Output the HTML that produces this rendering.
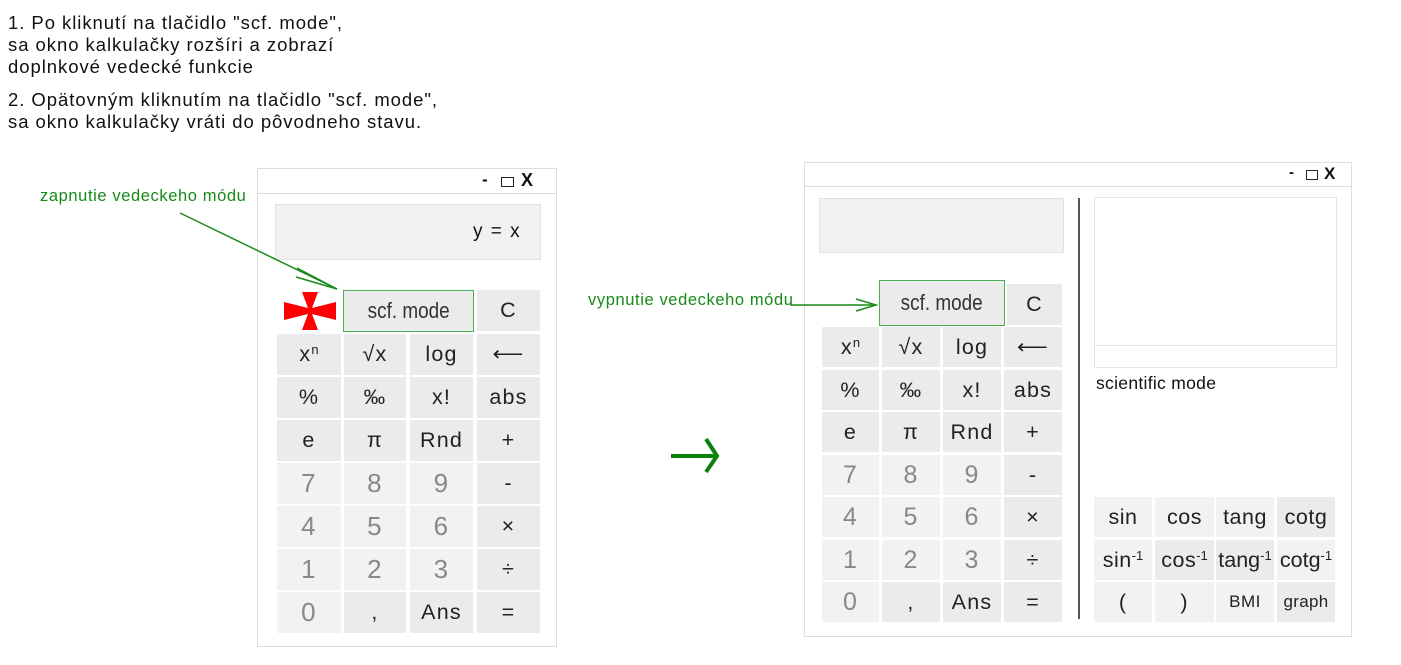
<!DOCTYPE html>
<html><head><meta charset="utf-8"><style>
*{margin:0;padding:0;box-sizing:border-box}
body{width:1401px;height:665px;background:#fff;position:relative;overflow:hidden;font-family:"Liberation Sans",Arial,sans-serif;color:#111}
.a{position:absolute}
.t{font-size:18.5px;line-height:22px;color:#111;white-space:nowrap;letter-spacing:0.95px}
.g{color:#178a17;font-size:16.5px;white-space:nowrap;letter-spacing:0.6px}
.win{position:absolute;border:1px solid #ddd;background:#fff}
.tb{position:absolute;left:0;right:0;top:0;border-bottom:1px solid #ddd}
.ctl{position:absolute;font-size:17px;font-weight:bold;color:#111}
.b{position:absolute;display:flex;align-items:center;justify-content:center;background:#ebebeb;color:#222;font-size:21.5px;letter-spacing:1.2px}
.d{background:#f2f2f2;color:#888}
.b sup{font-size:13px;position:relative;top:-5px;letter-spacing:0}
.disp{position:absolute;background:#f1f1f1;border:1px solid #e2e2e2}
.scf{position:absolute;display:flex;align-items:center;justify-content:center;background:#ebebeb;border:1px solid #4caf50;font-size:22px;color:#333}
.scf span{display:inline-block;transform:scaleX(0.86)}
</style></head><body>

<div class="a t" style="left:8px;top:12px">1. Po kliknutí na tlačidlo "scf. mode",<br>sa okno kalkulačky rozšíri a zobrazí<br>doplnkové vedecké funkcie</div>
<div class="a t" style="left:8px;top:89px">2. Opätovným kliknutím na tlačidlo "scf. mode",<br>sa okno kalkulačky vráti do pôvodneho stavu.</div>

<div class="a g" style="left:40px;top:187px">zapnutie vedeckeho módu</div>
<div class="a g" style="left:588px;top:291px">vypnutie vedeckeho módu</div>

<!-- LEFT WINDOW -->
<div class="win" style="left:257px;top:168px;width:300px;height:479px">
<div class="tb" style="height:25px"></div>
<div class="ctl" style="left:224px;top:1px">-</div>
<div class="a" style="left:243px;top:8px;width:13px;height:10px;border:1.5px solid #222"></div>
<div class="ctl" style="left:263px;top:1px;font-size:18px">X</div>
</div>
<div class="disp" style="left:275px;top:204px;width:266px;height:56px"></div>
<div class="a" style="left:473px;top:221px;font-size:19px;letter-spacing:1.5px">y = x</div>
<div class="scf" style="left:343px;top:290px;width:131px;height:42px"><span>scf. mode</span></div>
<div class="b" style="left:477px;top:290px;width:63px;height:41px">C</div>

<div class="b" style="left:277px;top:334px;width:64px;height:41px">x<sup>n</sup></div>
<div class="b" style="left:344px;top:334px;width:62px;height:41px">√x</div>
<div class="b" style="left:410px;top:334px;width:63px;height:41px">log</div>
<div class="b" style="left:477px;top:334px;width:63px;height:41px">⟵</div>
<div class="b" style="left:277px;top:377px;width:64px;height:41px">%</div>
<div class="b" style="left:344px;top:377px;width:62px;height:41px">‰</div>
<div class="b" style="left:410px;top:377px;width:63px;height:41px">x!</div>
<div class="b" style="left:477px;top:377px;width:63px;height:41px">abs</div>
<div class="b" style="left:277px;top:420px;width:64px;height:41px">e</div>
<div class="b" style="left:344px;top:420px;width:62px;height:41px">π</div>
<div class="b" style="left:410px;top:420px;width:63px;height:41px">Rnd</div>
<div class="b" style="left:477px;top:420px;width:63px;height:41px">+</div>
<div class="b d" style="left:277px;top:463px;width:64px;height:41px;font-size:26px">7</div>
<div class="b d" style="left:344px;top:463px;width:62px;height:41px;font-size:26px">8</div>
<div class="b d" style="left:410px;top:463px;width:63px;height:41px;font-size:26px">9</div>
<div class="b" style="left:477px;top:463px;width:63px;height:41px">-</div>
<div class="b d" style="left:277px;top:506px;width:64px;height:41px;font-size:26px">4</div>
<div class="b d" style="left:344px;top:506px;width:62px;height:41px;font-size:26px">5</div>
<div class="b d" style="left:410px;top:506px;width:63px;height:41px;font-size:26px">6</div>
<div class="b" style="left:477px;top:506px;width:63px;height:41px">×</div>
<div class="b d" style="left:277px;top:549px;width:64px;height:41px;font-size:26px">1</div>
<div class="b d" style="left:344px;top:549px;width:62px;height:41px;font-size:26px">2</div>
<div class="b d" style="left:410px;top:549px;width:63px;height:41px;font-size:26px">3</div>
<div class="b" style="left:477px;top:549px;width:63px;height:41px">÷</div>
<div class="b d" style="left:277px;top:592px;width:64px;height:41px;font-size:26px">0</div>
<div class="b" style="left:344px;top:592px;width:62px;height:41px">,</div>
<div class="b" style="left:410px;top:592px;width:63px;height:41px">Ans</div>
<div class="b" style="left:477px;top:592px;width:63px;height:41px">=</div>

<!-- RIGHT WINDOW -->
<div class="win" style="left:804px;top:162px;width:548px;height:475px">
<div class="tb" style="height:24px"></div>
<div class="ctl" style="left:484px;top:1px;font-size:15px">-</div>
<div class="a" style="left:501px;top:7px;width:12px;height:10px;border:1.5px solid #222"></div>
<div class="ctl" style="left:519px;top:1px;font-size:17px">X</div>
</div>
<div class="disp" style="left:819px;top:198px;width:245px;height:55px"></div>
<div class="a" style="left:1078px;top:198px;width:2px;height:421px;background:#555"></div>
<div class="a" style="left:1094px;top:197px;width:243px;height:171px;border:1px solid #e6e6e6"></div>
<div class="a" style="left:1094px;top:345px;width:243px;height:1px;background:#e6e6e6"></div>
<div class="a" style="left:1096px;top:373px;font-size:17.5px;letter-spacing:0.3px">scientific mode</div>

<div class="scf" style="left:879px;top:280px;width:126px;height:46px"><span>scf. mode</span></div>
<div class="b" style="left:1007px;top:284px;width:55px;height:41px">C</div>

<div class="b" style="left:822px;top:327px;width:57px;height:40px">x<sup>n</sup></div>
<div class="b" style="left:882px;top:327px;width:58px;height:40px">√x</div>
<div class="b" style="left:943px;top:327px;width:58px;height:40px">log</div>
<div class="b" style="left:1004px;top:327px;width:58px;height:40px">⟵</div>
<div class="b" style="left:822px;top:370px;width:57px;height:40px">%</div>
<div class="b" style="left:882px;top:370px;width:58px;height:40px">‰</div>
<div class="b" style="left:943px;top:370px;width:58px;height:40px">x!</div>
<div class="b" style="left:1004px;top:370px;width:58px;height:40px">abs</div>
<div class="b" style="left:822px;top:412px;width:57px;height:40px">e</div>
<div class="b" style="left:882px;top:412px;width:58px;height:40px">π</div>
<div class="b" style="left:943px;top:412px;width:58px;height:40px">Rnd</div>
<div class="b" style="left:1004px;top:412px;width:58px;height:40px">+</div>
<div class="b d" style="left:822px;top:455px;width:57px;height:40px;font-size:25px">7</div>
<div class="b d" style="left:882px;top:455px;width:58px;height:40px;font-size:25px">8</div>
<div class="b d" style="left:943px;top:455px;width:58px;height:40px;font-size:25px">9</div>
<div class="b" style="left:1004px;top:455px;width:58px;height:40px">-</div>
<div class="b d" style="left:822px;top:497px;width:57px;height:40px;font-size:25px">4</div>
<div class="b d" style="left:882px;top:497px;width:58px;height:40px;font-size:25px">5</div>
<div class="b d" style="left:943px;top:497px;width:58px;height:40px;font-size:25px">6</div>
<div class="b" style="left:1004px;top:497px;width:58px;height:40px">×</div>
<div class="b d" style="left:822px;top:540px;width:57px;height:40px;font-size:25px">1</div>
<div class="b d" style="left:882px;top:540px;width:58px;height:40px;font-size:25px">2</div>
<div class="b d" style="left:943px;top:540px;width:58px;height:40px;font-size:25px">3</div>
<div class="b" style="left:1004px;top:540px;width:58px;height:40px">÷</div>
<div class="b d" style="left:822px;top:582px;width:57px;height:40px;font-size:25px">0</div>
<div class="b" style="left:882px;top:582px;width:58px;height:40px">,</div>
<div class="b" style="left:943px;top:582px;width:58px;height:40px">Ans</div>
<div class="b" style="left:1004px;top:582px;width:58px;height:40px">=</div>

<div class="b d" style="left:1094px;top:497px;width:58px;height:40px;color:#222;letter-spacing:0.5px">sin</div>
<div class="b d" style="left:1155px;top:497px;width:59px;height:40px;color:#222;letter-spacing:0.5px">cos</div>
<div class="b d" style="left:1216px;top:497px;width:58px;height:40px;color:#222;letter-spacing:0.5px">tang</div>
<div class="b" style="left:1277px;top:497px;width:58px;height:40px;letter-spacing:0.5px">cotg</div>
<div class="b d" style="left:1094px;top:540px;width:58px;height:40px;color:#222;letter-spacing:0.5px">sin<sup>-1</sup></div>
<div class="b" style="left:1155px;top:540px;width:59px;height:40px;letter-spacing:0.5px">cos<sup>-1</sup></div>
<div class="b" style="left:1216px;top:540px;width:58px;height:40px;letter-spacing:0">tang<sup>-1</sup></div>
<div class="b d" style="left:1277px;top:540px;width:58px;height:40px;color:#222;letter-spacing:0">cotg<sup>-1</sup></div>
<div class="b d" style="left:1094px;top:582px;width:58px;height:40px;color:#222">(</div>
<div class="b d" style="left:1155px;top:582px;width:59px;height:40px;color:#222">)</div>
<div class="b d" style="left:1216px;top:582px;width:58px;height:40px;color:#222;font-size:17px;letter-spacing:0.5px">BMI</div>
<div class="b" style="left:1277px;top:582px;width:58px;height:40px;font-size:17px;letter-spacing:0.3px">graph</div>

<svg class="a" style="left:0;top:0;z-index:10" width="1401" height="665">
<g stroke="#178a17" stroke-width="1.5" fill="none">
<line x1="180" y1="213" x2="337" y2="289"/>
<polyline points="297,268 337,289 296,277"/>
<line x1="790" y1="305" x2="876" y2="305"/>
<polyline points="856,299 876,305 856,311"/>
</g>
<g stroke="#0b800b" stroke-width="4" fill="none">
<line x1="671" y1="456" x2="716" y2="456"/>
<polyline points="706,439 717,456 706,472"/>
</g>
<path fill="#f00" d="M302,292 L318,292 L312,308 L336,302 L336,320 L312,314 L318,330 L302,330 L308,314 L284,320 L284,302 L308,308 Z"/>
</svg>

</body></html>
